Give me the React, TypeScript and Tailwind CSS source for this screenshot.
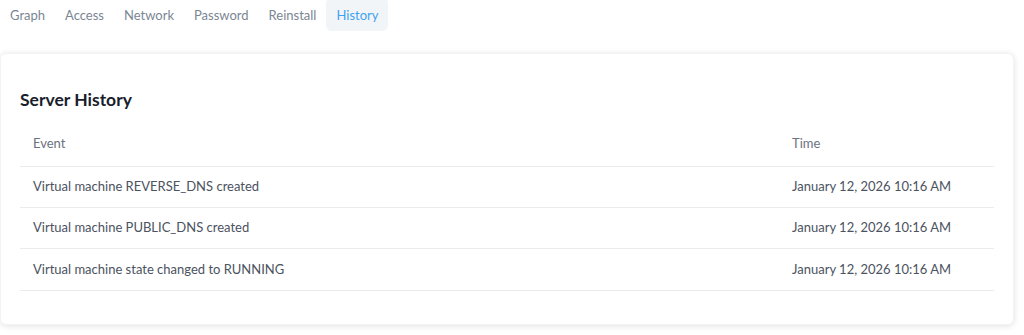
import React from "react";

const tabs = ["Graph", "Access", "Network", "Password", "Reinstall", "History"];
const rows = [
  "Virtual machine REVERSE_DNS created",
  "Virtual machine PUBLIC_DNS created",
  "Virtual machine state changed to RUNNING",
];

export default function App() {
  return (
    <div className="w-[1024px] h-[335px] bg-white overflow-hidden" style={{ fontFamily: "Lato, 'Noto Sans', sans-serif" }}>
      <div className="flex items-center h-[31px]">
        {tabs.map((t) => (
          <div
            key={t}
            className={
              t === "History"
                ? "h-[31px] px-[10px] flex items-center rounded-b-[6px] rounded-t-[2px] bg-[#f2f5f8] text-[13px] text-[#3ea2f2]"
                : "h-[31px] px-[10px] flex items-center text-[13px] text-[#7b8694]"
            }
          >
            {t}
          </div>
        ))}
      </div>
      <div className="mt-[22px] mr-[10px] h-[272px] rounded-[6px] bg-white shadow-[0_1px_6px_rgba(0,0,0,0.12)] border border-[#f3f3f3] px-[19px] pt-[33px]">
        <h2 className="text-[17.5px] font-bold text-[#1a1d2b] leading-[26px]">Server History</h2>
        <table className="w-full mt-[12px] text-[13px]">
          <thead>
            <tr className="border-b border-[#ececec]">
              <th className="h-[41px] text-left font-normal text-[#6b7280] pl-[13px] pb-[3px]">Event</th>
              <th className="h-[41px] text-left font-normal text-[#6b7280] w-[202px] pb-[3px]">Time</th>
            </tr>
          </thead>
          <tbody>
            {rows.map((r) => (
              <tr key={r} className="border-b border-[#ececec]">
                <td className="h-[41.4px] pl-[13px] text-[#4b5260]">{r}</td>
                <td className="h-[41.4px] text-[#4b5260]">January 12, 2026 10:16 AM</td>
              </tr>
            ))}
          </tbody>
        </table>
      </div>
    </div>
  );
}
